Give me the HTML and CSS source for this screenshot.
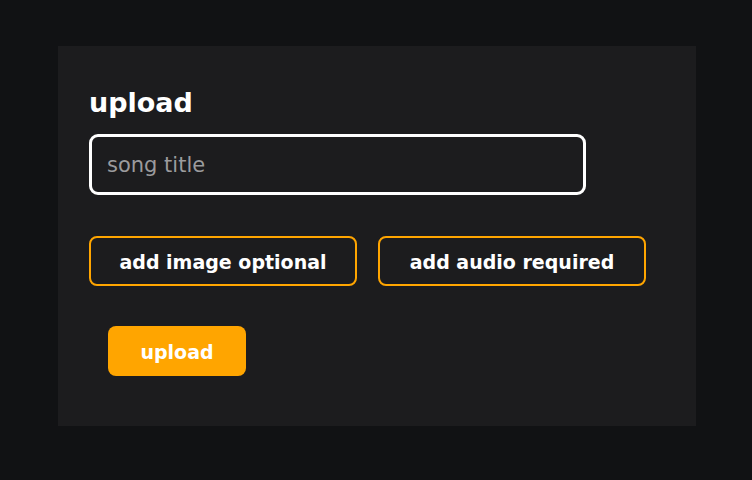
FILE: index.html
```html
<!DOCTYPE html>
<html>
<head>
<meta charset="utf-8">
<link rel="stylesheet" href="styles.css">
</head>
<body>
<div class="card">
  <h1 class="title">upload</h1>
  <input class="title-input" type="text" placeholder="song title">
  <div class="file-row">
    <button class="file-btn">add image optional</button>
    <button class="file-btn">add audio required</button>
  </div>
  <button class="submit-btn">upload</button>
</div>
</body>
</html>
```
FILE: styles.css
```css
html, body {
  margin: 0;
  padding: 0;
  background: #111214;
  width: 752px;
  height: 480px;
  font-family: "DejaVu Sans", Verdana, sans-serif;
}
body {
  padding: 46px 56px 54px 58px;
  box-sizing: border-box;
}
.card {
  background: #1c1c1e;
  width: 638px;
  height: 380px;
  box-sizing: border-box;
  padding: 0 31px;
  display: flex;
  flex-direction: column;
  align-items: flex-start;
}
.title {
  margin: 38px 0 0 0;
  font-size: 27px;
  font-weight: bold;
  color: #ffffff;
  line-height: 37px;
  height: 50px;
}
.title-input {
  width: 497px;
  height: 61px;
  box-sizing: border-box;
  border: 3px solid #ffffff;
  border-radius: 9px;
  background: #1c1c1e;
  color: #ffffff;
  font-family: "DejaVu Sans", Verdana, sans-serif;
  font-size: 21px;
  padding: 0 15px;
  outline: none;
}
.title-input::placeholder {
  color: #9b9b9d;
}
.file-row {
  display: flex;
  gap: 21px;
  margin-top: 41px;
}
.file-btn {
  width: 268px;
  height: 50px;
  box-sizing: border-box;
  border: 2px solid #ffa500;
  border-radius: 8px;
  background: transparent;
  color: #ffffff;
  font-family: "DejaVu Sans", Verdana, sans-serif;
  font-size: 19px;
  font-weight: bold;
  padding: 2px 0 0 0;
}
.submit-btn {
  margin: 40px 0 0 19px;
  width: 138px;
  height: 50px;
  border: none;
  border-radius: 8px;
  background: #ffa500;
  color: #ffffff;
  font-family: "DejaVu Sans", Verdana, sans-serif;
  font-size: 19px;
  font-weight: bold;
  padding: 2px 0 0 0;
}
```
